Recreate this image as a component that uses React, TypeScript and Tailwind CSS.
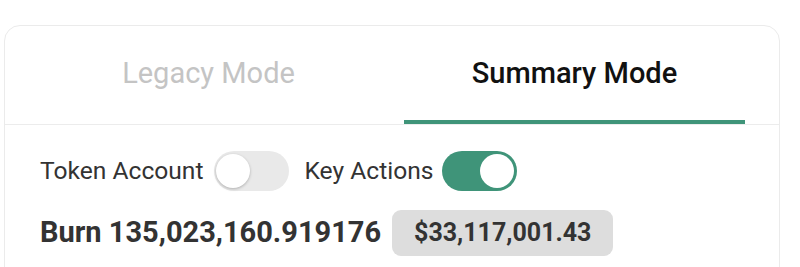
import React from "react";

function Toggle({ on }: { on: boolean }) {
  return (
    <div
      className={
        "relative h-[40px] w-[75px] rounded-full " +
        (on ? "bg-[#3f9479]" : "bg-[#e9e9e9]")
      }
    >
      <div
        className={
          "absolute top-[3px] h-[34px] w-[34px] rounded-full bg-white " +
          (on ? "right-[3px]" : "left-[2px] shadow-[0_1px_3px_rgba(0,0,0,0.25)]")
        }
      />
    </div>
  );
}

export default function App() {
  return (
    <div className="h-[267px] w-[800px] overflow-hidden bg-white pt-[25px] pl-[4px] font-['Roboto',sans-serif]">
      <div className="h-[300px] w-[776px] rounded-t-[16px] border border-[#ebebeb] bg-white">
        <div className="flex h-[99px] gap-[25px] border-b border-[#ececec] px-[33px]">
          <div className="flex w-[341px] items-center justify-center pb-[2px] text-[29px] text-[#c4c4c4]">
            Legacy Mode
          </div>
          <div className="relative flex w-[341px] items-center justify-center pb-[2px] text-[29px] font-medium text-[#111111]">
            Summary Mode
            <div className="absolute bottom-0 left-0 right-0 h-[4px] bg-[#3f9479]" />
          </div>
        </div>
        <div className="pl-[35px] pt-[26px]">
          <div className="flex items-center">
            <span className="text-[24.6px] text-[#333333]">Token Account</span>
            <div className="ml-[11px]">
              <Toggle on={false} />
            </div>
            <span className="ml-[15px] text-[24.6px] text-[#333333]">Key Actions</span>
            <div className="ml-[9px]">
              <Toggle on={true} />
            </div>
          </div>
          <div className="mt-[19px] flex items-center">
            <span className="text-[29px] font-bold text-[#333333]">Burn 135,023,160.919176</span>
            <span className="ml-[11px] flex h-[46px] items-center rounded-[9px] bg-[#dddddd] px-[22px] text-[25px] font-bold text-[#333333]">
              $33,117,001.43
            </span>
          </div>
        </div>
      </div>
    </div>
  );
}
